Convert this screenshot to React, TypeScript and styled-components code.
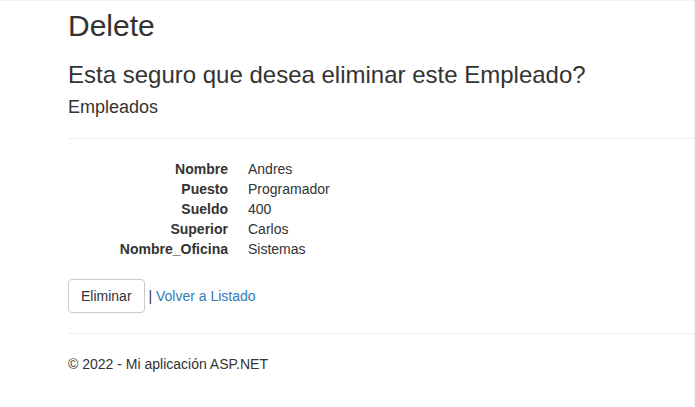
import React from "react";
import styled, { createGlobalStyle } from "styled-components";

const GlobalStyle = createGlobalStyle`
  html, body {
    margin: 0;
    padding: 0;
    background: #fff;
  }
  body {
    font-family: "Liberation Sans", Arial, Helvetica, sans-serif;
    font-size: 14px;
    line-height: 1.42857143;
    color: #333;
  }
  * { box-sizing: border-box; }
`;

const Frame = styled.div`
  min-height: 407px;
  border-top: 1px solid #f1f1f1;
  border-right: 1px solid #f1f1f1;
  padding-left: 68px;
  overflow: hidden;
`;

const Title = styled.h2`
  font-size: 30px;
  font-weight: 500;
  line-height: 1.1;
  margin: 8px 0 10px;
`;

const Question = styled.h3`
  font-size: 24px;
  font-weight: 500;
  line-height: 1.1;
  margin: 20px 0 10px;
`;

const Subtitle = styled.h4`
  font-size: 18px;
  font-weight: 500;
  line-height: 1.1;
  margin: 10px 0 10px;
`;

const Rule = styled.hr`
  margin: 20px 0;
  border: 0;
  border-top: 1px solid #eee;
  height: 0;
`;

const DetailList = styled.dl`
  display: grid;
  grid-template-columns: 160px 1fr;
  column-gap: 20px;
  margin: 0 0 20px;
`;

const Term = styled.dt`
  font-weight: 700;
  text-align: right;
  white-space: nowrap;
`;

const Value = styled.dd`
  margin: 0;
`;

const Actions = styled.div`
  display: flex;
  align-items: center;
  white-space: pre;
`;

const Button = styled.button`
  font-family: inherit;
  font-size: 14px;
  line-height: 1.42857143;
  padding: 6px 12px;
  color: #333;
  background: #fff;
  border: 1px solid #ccc;
  border-radius: 4px;
  cursor: pointer;
`;

const Link = styled.a`
  color: #337ab7;
  text-decoration: none;
`;

const Footer = styled.footer`
  p {
    margin: 0 0 10px;
  }
`;

const fields: [string, string][] = [
  ["Nombre", "Andres"],
  ["Puesto", "Programador"],
  ["Sueldo", "400"],
  ["Superior", "Carlos"],
  ["Nombre_Oficina", "Sistemas"],
];

export default function App() {
  return (
    <>
      <GlobalStyle />
      <Frame>
        <Title>Delete</Title>
        <Question>Esta seguro que desea eliminar este Empleado?</Question>
        <div>
          <Subtitle>Empleados</Subtitle>
          <Rule />
          <DetailList>
            {fields.map(([k, v]) => (
              <React.Fragment key={k}>
                <Term>{k}</Term>
                <Value>{v}</Value>
              </React.Fragment>
            ))}
          </DetailList>
          <form onSubmit={(e) => e.preventDefault()}>
            <Actions>
              <Button type="submit">Eliminar</Button>
              <span> | </span>
              <Link href="#">Volver a Listado</Link>
            </Actions>
          </form>
        </div>
        <Rule />
        <Footer>
          <p>© 2022 - Mi aplicación ASP.NET</p>
        </Footer>
      </Frame>
    </>
  );
}
